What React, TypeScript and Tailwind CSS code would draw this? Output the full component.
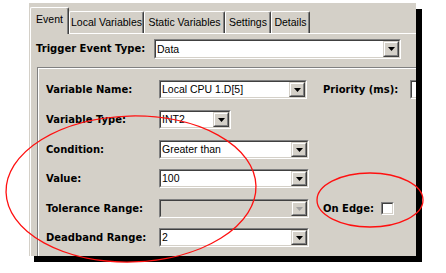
import React from "react";

const sunkenOuter =
  "border border-t-[#808080] border-l-[#808080] border-b-white border-r-white";
const sunkenInner =
  "border border-t-[#404040] border-l-[#404040] border-b-[#d4d0c8] border-r-[#d4d0c8]";
const boldText =
  "whitespace-nowrap font-['DejaVu_Sans',sans-serif] text-[10px] font-bold leading-none text-black";

function Arrow({ disabled }: { disabled?: boolean }) {
  return (
    <svg width="7" height="4" viewBox="0 0 7 4">
      <path d="M0 0h7L3.5 4z" fill={disabled ? "#a0a0a0" : "#000"} />
    </svg>
  );
}

function DropBtn({ disabled }: { disabled?: boolean }) {
  return (
    <div className="h-full w-[16px] shrink-0 border border-t-[#d4d0c8] border-l-[#d4d0c8] border-b-[#404040] border-r-[#404040] bg-[#d4d0c8]">
      <div className="flex h-full w-full items-center justify-center border border-t-white border-l-white border-b-[#808080] border-r-[#808080]">
        <Arrow disabled={disabled} />
      </div>
    </div>
  );
}

function Combo({
  text,
  width,
  height = "h-[19px]",
  disabled,
}: {
  text: string;
  width: string;
  height?: string;
  disabled?: boolean;
}) {
  return (
    <div className={`${width} ${height} shrink-0 ${sunkenOuter}`}>
      <div
        className={`flex h-full w-full items-stretch ${sunkenInner} ${
          disabled ? "bg-[#d4d0c8]" : "bg-white"
        }`}
      >
        <div className="flex flex-1 items-center overflow-hidden whitespace-nowrap pl-[1px] text-[10.5px] leading-none text-black">
          {text}
        </div>
        <DropBtn disabled={disabled} />
      </div>
    </div>
  );
}

function Label({ children }: { children: React.ReactNode }) {
  return <div className={`w-[113px] shrink-0 ${boldText}`}>{children}</div>;
}

function Tab({
  label,
  width,
  selected,
}: {
  label: string;
  width: string;
  selected?: boolean;
}) {
  return (
    <div
      className={`${width} ${
        selected ? "relative z-10 -mb-[1px] h-[27px] pt-[5px]" : "h-[22px] pt-[4px]"
      } shrink-0 rounded-t-[2px] border-l border-t border-r border-l-white border-t-white border-r-[#404040] bg-[#d4d0c8] text-center text-[10.5px] leading-[13px] text-black shadow-[inset_-1px_0_0_#808080] whitespace-nowrap`}
    >
      {label}
    </div>
  );
}

export default function App() {
  return (
    <div className="relative h-[273px] w-[446px] overflow-hidden bg-white font-['Liberation_Sans',Arial,sans-serif]">
      <div className="ml-[28px] mt-[3px] h-[253px] w-[388px] bg-[#d4d0c8] shadow-[6px_6px_0_0_#000]">
        <div className="h-full w-full overflow-hidden border-l border-l-white">
          {/* tab strip */}
          <div className="flex h-[30px] items-end pl-[1px]">
            <Tab label="Event" width="w-[39px]" selected />
            <Tab label="Local Variables" width="w-[75px]" />
            <Tab label="Static Variables" width="w-[81px]" />
            <Tab label="Settings" width="w-[46px]" />
            <Tab label="Details" width="w-[39px]" />
          </div>
          {/* tab panel */}
          <div className="ml-[1px] h-[230px] w-[420px] border-l border-t border-l-white border-t-white">
            <div className="mt-[5px] flex items-center pl-[5px]">
              <div className={`w-[118px] shrink-0 ${boldText}`}>Trigger Event Type:</div>
              <Combo text="Data" width="w-[247px]" height="h-[20px]" />
            </div>
            {/* inner group */}
            <div className="ml-[6px] mt-[8px] h-[200px] w-[420px] border-l border-t border-l-[#808080] border-t-[#808080] shadow-[inset_1px_1px_0_white] pl-[8px] pt-[12px]">
              <div className="flex items-center">
                <Label>Variable Name:</Label>
                <Combo text="Local CPU 1.D[5]" width="w-[148px]" />
                <div className={`ml-[16px] ${boldText}`}>Priority (ms):</div>
                <div className={`ml-[12px] h-[19px] w-[40px] shrink-0 ${sunkenOuter}`}>
                  <div className={`h-full w-full bg-white ${sunkenInner}`} />
                </div>
              </div>
              <div className="mt-[11px] flex items-center">
                <Label>Variable Type:</Label>
                <Combo text="INT2" width="w-[72px]" />
              </div>
              <div className="mt-[11px] flex items-center">
                <Label>Condition:</Label>
                <Combo text="Greater than" width="w-[150px]" />
              </div>
              <div className="mt-[10px] flex items-center">
                <Label>Value:</Label>
                <Combo text="100" width="w-[150px]" />
              </div>
              <div className="mt-[11px] flex items-center">
                <Label>Tolerance Range:</Label>
                <Combo text="" width="w-[150px]" disabled />
                <div className={`ml-[14px] ${boldText}`}>On Edge:</div>
                <div className={`ml-[7px] h-[13px] w-[13px] shrink-0 ${sunkenOuter}`}>
                  <div className={`h-full w-full bg-white ${sunkenInner}`} />
                </div>
              </div>
              <div className="mt-[10px] flex items-center">
                <Label>Deadband Range:</Label>
                <Combo text="2" width="w-[150px]" />
              </div>
            </div>
          </div>
        </div>
      </div>
      {/* annotation ellipses */}
      <svg
        className="pointer-events-none absolute left-0 top-0"
        width="446"
        height="273"
        viewBox="0 0 446 273"
      >
        <ellipse
          cx="131"
          cy="189"
          rx="125"
          ry="73"
          transform="rotate(-1.5 131 189)"
          fill="none"
          stroke="#ff1010"
          strokeWidth="1.3"
        />
        <ellipse
          cx="370"
          cy="200"
          rx="53"
          ry="27"
          fill="none"
          stroke="#ff1010"
          strokeWidth="1.3"
        />
      </svg>
    </div>
  );
}
